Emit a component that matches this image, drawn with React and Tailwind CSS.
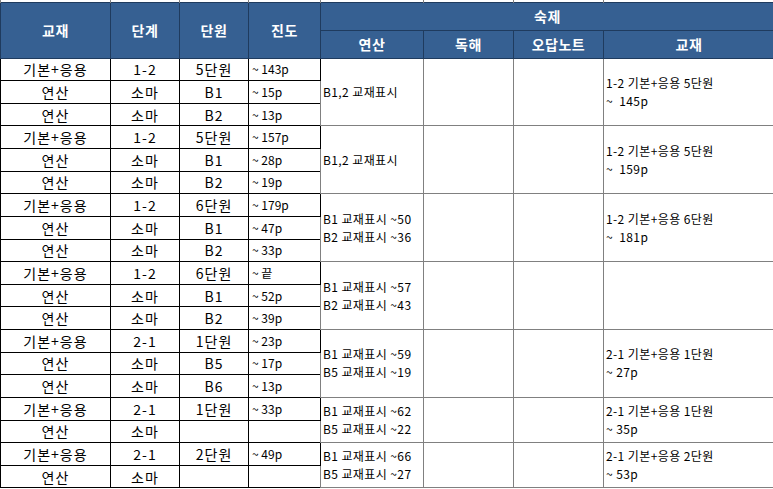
const groups = [
  {
    rows: [
      ['기본+응용', '1-2', '5단원', '~ 143p'],
      ['연산', '소마', 'B1', '~ 15p'],
      ['연산', '소마', 'B2', '~ 13p'],
    ],
    calc: ['B1,2 교재표시'],
    book: ['1-2 기본+응용 5단원', '~  145p'],
  },
  {
    rows: [
      ['기본+응용', '1-2', '5단원', '~ 157p'],
      ['연산', '소마', 'B1', '~ 28p'],
      ['연산', '소마', 'B2', '~ 19p'],
    ],
    calc: ['B1,2 교재표시'],
    book: ['1-2 기본+응용 5단원', '~  159p'],
  },
  {
    rows: [
      ['기본+응용', '1-2', '6단원', '~ 179p'],
      ['연산', '소마', 'B1', '~ 47p'],
      ['연산', '소마', 'B2', '~ 33p'],
    ],
    calc: ['B1 교재표시 ~50', 'B2 교재표시 ~36'],
    book: ['1-2 기본+응용 6단원', '~  181p'],
  },
  {
    rows: [
      ['기본+응용', '1-2', '6단원', '~ 끝'],
      ['연산', '소마', 'B1', '~ 52p'],
      ['연산', '소마', 'B2', '~ 39p'],
    ],
    calc: ['B1 교재표시 ~57', 'B2 교재표시 ~43'],
    book: [],
  },
  {
    rows: [
      ['기본+응용', '2-1', '1단원', '~ 23p'],
      ['연산', '소마', 'B5', '~ 17p'],
      ['연산', '소마', 'B6', '~ 13p'],
    ],
    calc: ['B1 교재표시 ~59', 'B5 교재표시 ~19'],
    book: ['2-1 기본+응용 1단원', '~ 27p'],
  },
  {
    rows: [
      ['기본+응용', '2-1', '1단원', '~ 33p'],
      ['연산', '소마', '', ''],
    ],
    calc: ['B1 교재표시 ~62', 'B5 교재표시 ~22'],
    book: ['2-1 기본+응용 1단원', '~ 35p'],
  },
  {
    rows: [
      ['기본+응용', '2-1', '2단원', '~ 49p'],
      ['연산', '소마', '', ''],
    ],
    calc: ['B1 교재표시 ~66', 'B5 교재표시 ~27'],
    book: ['2-1 기본+응용 2단원', '~ 53p'],
  },
];

const font = { fontFamily: '"Noto Sans CJK KR", "Noto Sans", sans-serif' };

function Lines({ items }) {
  return (
    <div className="flex flex-col leading-[18px] whitespace-pre">
      {items.map((t) => (
        <span key={t}>{t}</span>
      ))}
    </div>
  );
}

export default function App() {
  const th = 'border border-[#1f3b5e] bg-[#366092] p-0 text-[14px] font-bold tracking-[0.5px] text-white';
  const td = 'border border-black p-0 leading-none';
  const tdr = 'border border-[#808080] p-0 pl-[2px] align-middle text-left text-[12px] tracking-[0.4px]';
  return (
    <div className="h-[489px] w-[773px] overflow-hidden bg-white text-black" style={font}>
      <table className="w-[774px] table-fixed border-collapse">
        <colgroup>
          <col className="w-[110px]" />
          <col className="w-[69px]" />
          <col className="w-[69px]" />
          <col className="w-[72px]" />
          <col className="w-[103px]" />
          <col className="w-[90px]" />
          <col className="w-[90px]" />
          <col className="w-[171px]" />
        </colgroup>
        <tbody>
          <tr className="h-[2px]">
            {Array.from({ length: 8 }).map((_, i) => (
              <td key={i} className="border-x border-[#808080] p-0 text-[0px] leading-none" />
            ))}
          </tr>
          <tr className="h-[28px]">
            <th rowSpan={2} className={th}>교재</th>
            <th rowSpan={2} className={th}>단계</th>
            <th rowSpan={2} className={th}>단원</th>
            <th rowSpan={2} className={th}>진도</th>
            <th colSpan={4} className={th}>숙제</th>
          </tr>
          <tr className="h-[28px]">
            <th className={th}>연산</th>
            <th className={th}>독해</th>
            <th className={th}>오답노트</th>
            <th className={th}>교재</th>
          </tr>
          {groups.map((g, gi) =>
            g.rows.map((r, ri) => {
              const top = ri === 0 ? 'border-t-[#808080]' : '';
              const mid = `${td} ${top} text-center text-[14px] tracking-[1px]`;
              return (
                <tr key={`${gi}-${ri}`} className="h-[22.63px]">
                  <td className={mid}>{r[0]}</td>
                  <td className={mid}>{r[1]}</td>
                  <td className={mid}>{r[2]}</td>
                  <td className={`${td} ${top} pl-[3px] text-left text-[12px] whitespace-pre`}>{r[3]}</td>
                  {ri === 0 ? (
                    <>
                      <td rowSpan={g.rows.length} className={tdr}>
                        <Lines items={g.calc} />
                      </td>
                      <td rowSpan={g.rows.length} className={tdr} />
                      <td rowSpan={g.rows.length} className={tdr} />
                      <td rowSpan={g.rows.length} className={tdr}>
                        <Lines items={g.book} />
                      </td>
                    </>
                  ) : null}
                </tr>
              );
            })
          )}
        </tbody>
      </table>
    </div>
  );
}
